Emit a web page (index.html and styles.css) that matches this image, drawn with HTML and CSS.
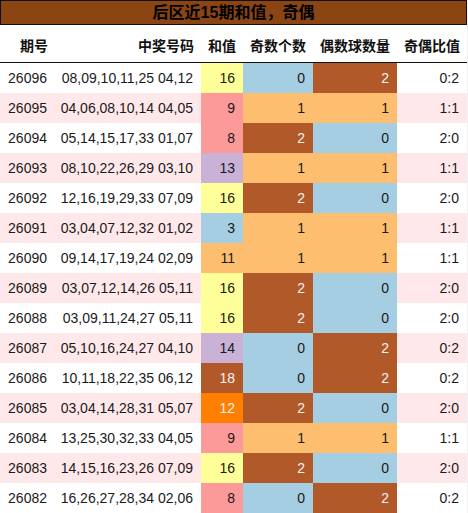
FILE: index.html
```html
<!DOCTYPE html>
<html lang="zh">

<head>
    <meta charset="UTF-8">
    <title>后区近15期和值，奇偶</title>
    <link rel="stylesheet" href="styles.css">
</head>

<body>
    <div class="board">
        <div class="title">后区近15期和值，奇偶</div>
        <table class="stats">
            <colgroup>
                <col class="c-issue">
                <col class="c-nums">
                <col class="c-sum">
                <col class="c-odd">
                <col class="c-even">
                <col class="c-ratio">
            </colgroup>
            <thead>
                <tr>
                    <th>期号</th>
                    <th>中奖号码</th>
                    <th>和值</th>
                    <th>奇数个数</th>
                    <th>偶数球数量</th>
                    <th>奇偶比值</th>
                </tr>
            </thead>
            <tbody id="rows"></tbody>
        </table>
    </div>
    <script>
        // issue, front, back, sum, odd, even
        const draws = [
            ['26096', '08,09,10,11,25', '04,12', 16, 0, 2],
            ['26095', '04,06,08,10,14', '04,05', 9, 1, 1],
            ['26094', '05,14,15,17,33', '01,07', 8, 2, 0],
            ['26093', '08,10,22,26,29', '03,10', 13, 1, 1],
            ['26092', '12,16,19,29,33', '07,09', 16, 2, 0],
            ['26091', '03,04,07,12,32', '01,02', 3, 1, 1],
            ['26090', '09,14,17,19,24', '02,09', 11, 1, 1],
            ['26089', '03,07,12,14,26', '05,11', 16, 2, 0],
            ['26088', '03,09,11,24,27', '05,11', 16, 2, 0],
            ['26087', '05,10,16,24,27', '04,10', 14, 0, 2],
            ['26086', '10,11,18,22,35', '06,12', 18, 0, 2],
            ['26085', '03,04,14,28,31', '05,07', 12, 2, 0],
            ['26084', '13,25,30,32,33', '04,05', 9, 1, 1],
            ['26083', '14,15,16,23,26', '07,09', 16, 2, 0],
            ['26082', '16,26,27,28,34', '02,06', 8, 0, 2]
        ];

        // sum value -> colour class
        const sumClass = {3: 'blue', 8: 'pink', 9: 'pink', 11: 'peach', 12: 'orange',
            13: 'lilac', 14: 'lilac', 16: 'yellow', 18: 'brown'};
        const countClass = ['blue', 'peach', 'brown'];

        const tbody = document.getElementById('rows');
        draws.forEach(d => {
            const tr = document.createElement('tr');
            tr.innerHTML =
                '<td>' + d[0] + '</td>' +
                '<td>' + d[1] + ' ' + d[2] + '</td>' +
                '<td class="' + sumClass[d[3]] + '">' + d[3] + '</td>' +
                '<td class="' + countClass[d[4]] + '">' + d[4] + '</td>' +
                '<td class="' + countClass[d[5]] + '">' + d[5] + '</td>' +
                '<td>' + d[4] + ':' + d[5] + '</td>';
            tbody.appendChild(tr);
        });
    </script>
</body>

</html>
```

FILE: styles.css
```css
body {
    margin: 0;
    background-color: #f2f2f2;
    font-family: "Liberation Sans", "Noto Sans CJK SC", sans-serif;
}

.board {
    width: 467px;
    background-color: #fff;
}

.title {
    height: 23px;
    line-height: 23px;
    border: 1px solid #111;
    background-color: #8b4513;
    color: #000;
    font-weight: bold;
    font-size: 16px;
    text-align: center;
}

.stats {
    width: 467px;
    border-collapse: collapse;
    table-layout: fixed;
    font-size: 14px;
}

.c-issue { width: 55px; }
.c-nums { width: 146px; }
.c-sum { width: 42px; }
.c-odd { width: 70px; }
.c-even { width: 84px; }
.c-ratio { width: 70px; }

.stats th {
    height: 35px;
    padding: 2px 7px 0 0;
    text-align: right;
    font-weight: bold;
    color: #111;
    border-bottom: 1px solid #111;
    white-space: nowrap;
}

.stats td {
    height: 30px;
    padding: 0 8px 0 0;
    text-align: right;
    color: #1a1a1a;
    white-space: nowrap;
}

.stats tbody tr:nth-child(even) {
    background-color: #ffe8ea;
}

.stats td.blue { background-color: #a6cee3; }
.stats td.pink { background-color: #fb9a99; }
.stats td.peach { background-color: #fdbf6f; }
.stats td.lilac { background-color: #cab2d6; }
.stats td.yellow { background-color: #ffff99; }
.stats td.orange { background-color: #ff7f00; color: #f4f4f4; }
.stats td.brown { background-color: #b15928; color: #f4f4f4; }
```
